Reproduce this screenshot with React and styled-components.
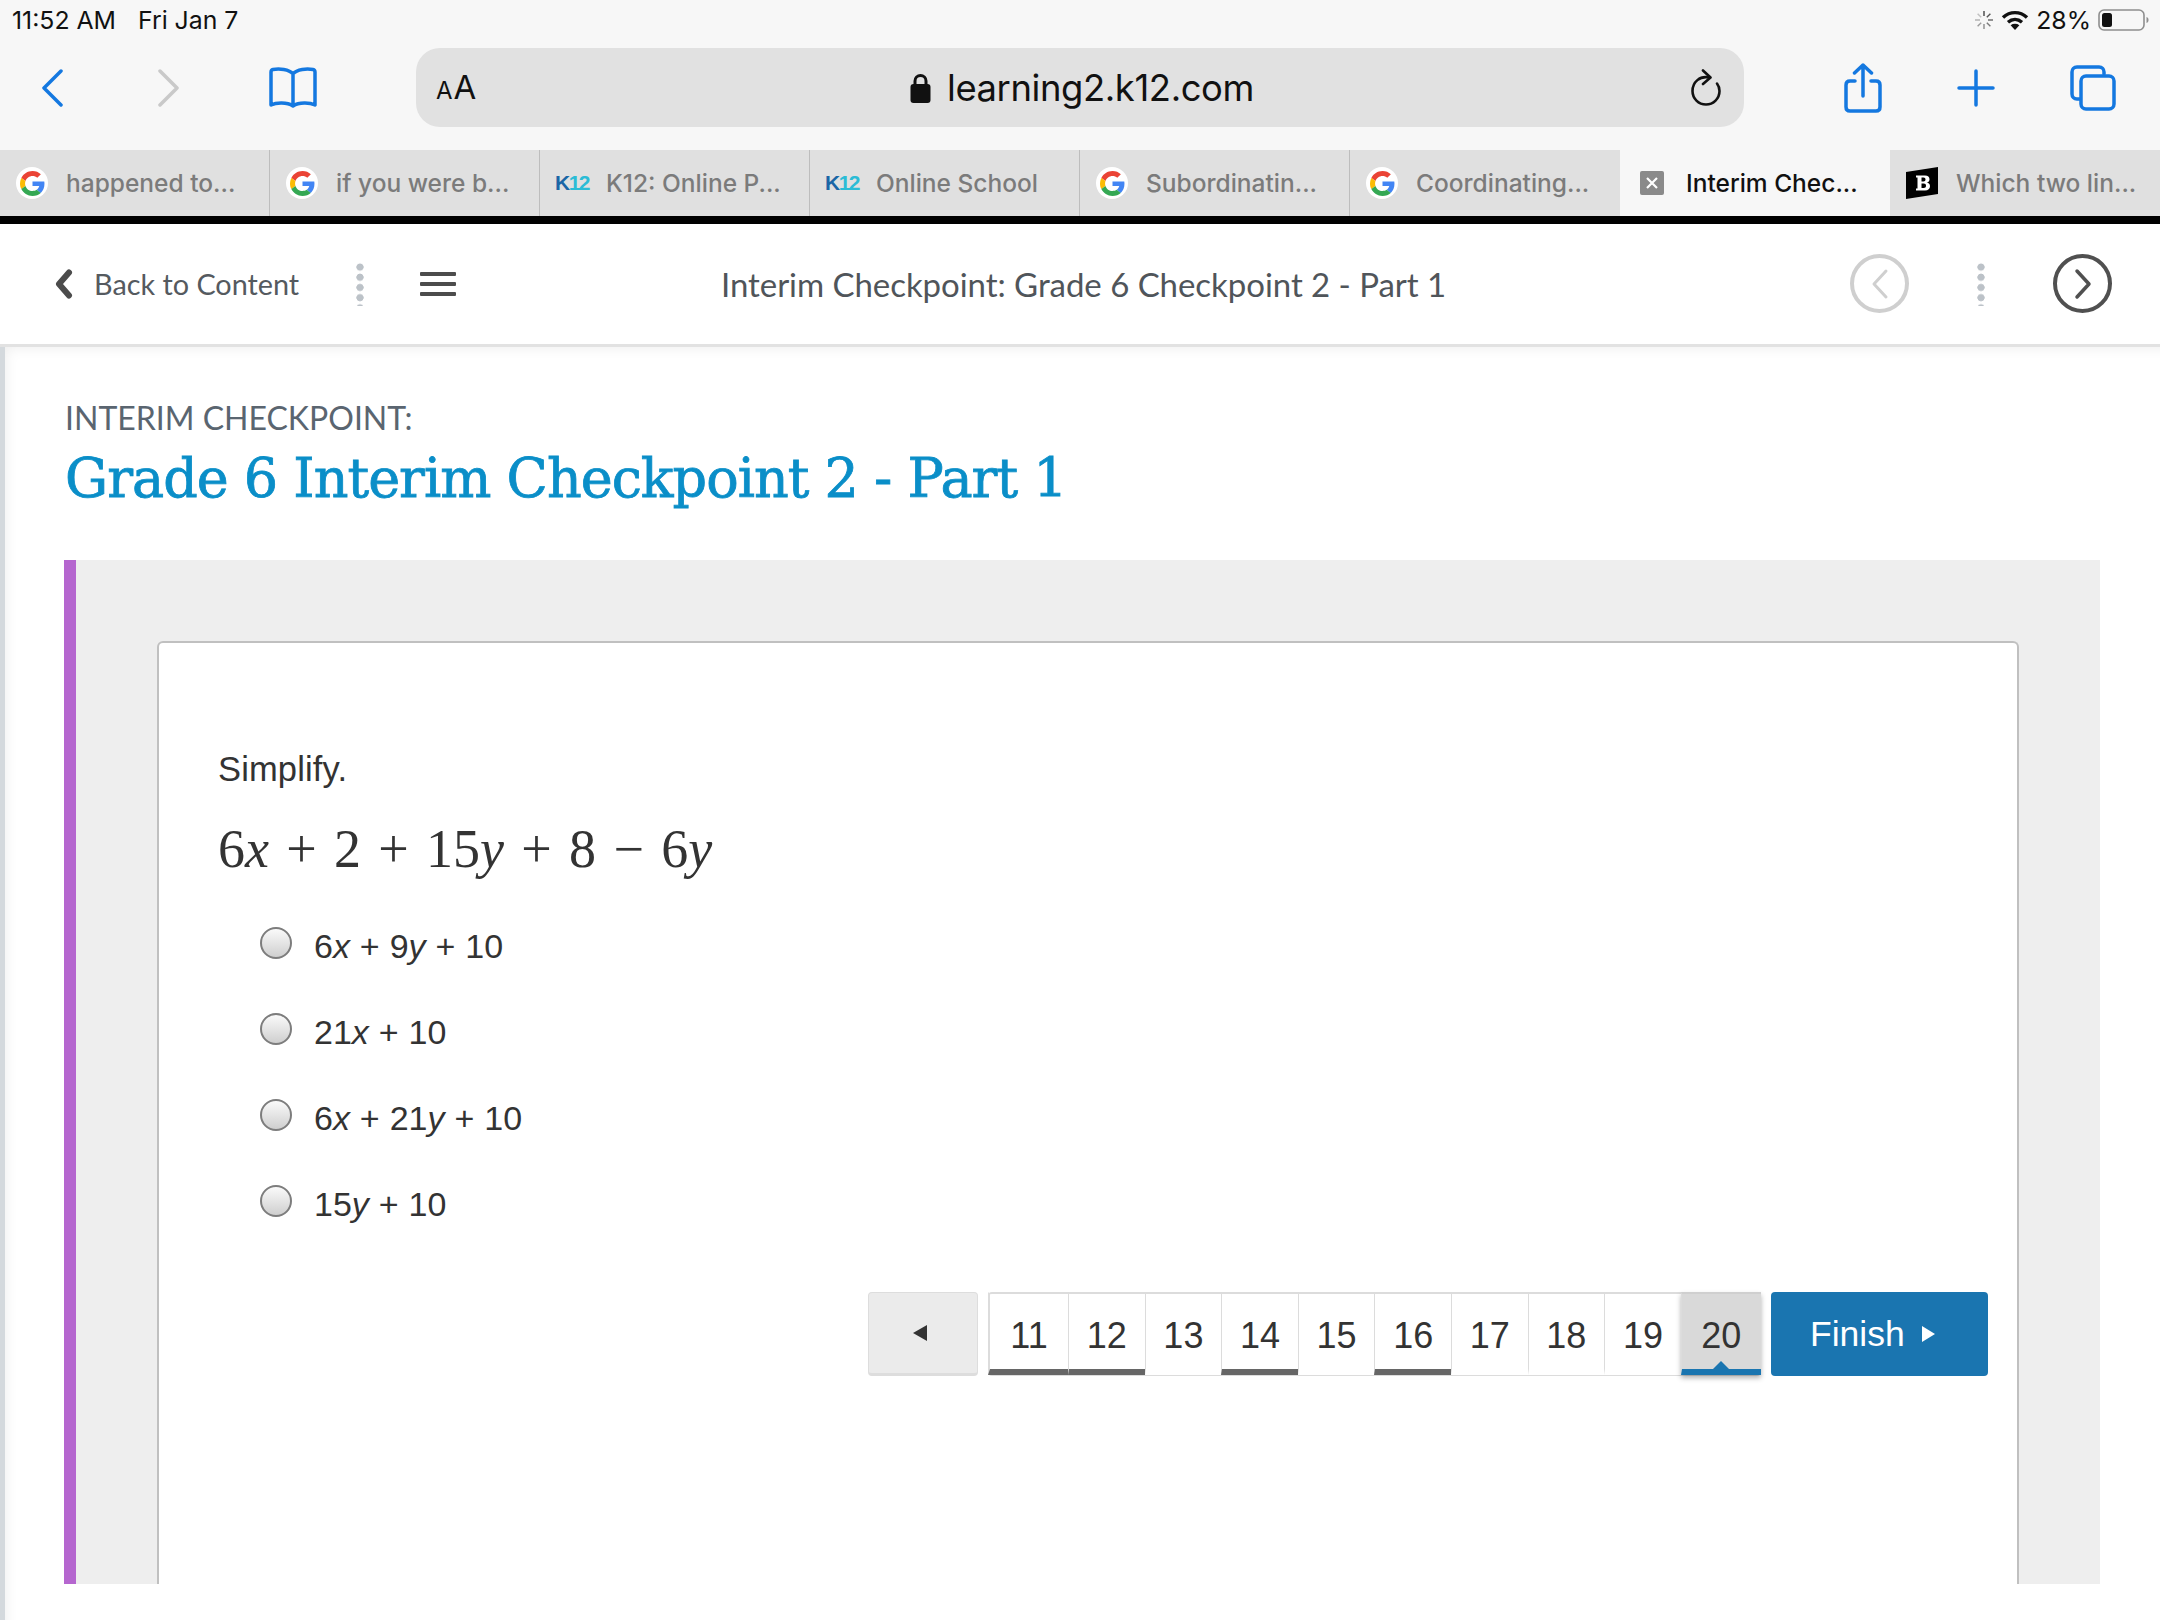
import React from 'react';
import styled, { createGlobalStyle } from 'styled-components';

const GlobalStyle = createGlobalStyle`
    html, body {
        margin: 0;
        padding: 0;
        background: #fff;
    }
    * {
        box-sizing: border-box;
    }
`;

const Screen = styled.div`
    width: 2160px;
    height: 1620px;
    overflow: hidden;
    display: flex;
    flex-direction: column;
    background: #fff;
`;

// ipad status bar + safari chrome
const Chrome = styled.div`
    background: #f7f7f7;
    font-family: Inter, "Liberation Sans", sans-serif;
`;

const StatusBar = styled.div`
    height: 48px;
    padding: 0 11px 8px 12px;
    display: flex;
    align-items: center;
    justify-content: space-between;
    font-size: 24.8px;
    color: #111;
`;

const StatusGroup = styled.div`
    display: flex;
    align-items: center;
    gap: ${p => p.$gap}px;
`;

const Toolbar = styled.div`
    height: 102px;
    padding: 0 0 23px 41px;
    display: flex;
    align-items: center;
    color: #1478e0;
`;

const ToolIcon = styled.svg`
    flex: none;
    margin-left: ${p => p.$left || 0}px;
    fill: none;
    stroke: ${p => p.$muted ? '#c9c9c9' : '#1478e0'};
    stroke-width: ${p => p.$stroke || 3.5};
    stroke-linecap: round;
    stroke-linejoin: round;
`;

const AddressBar = styled.div`
    width: 1328px;
    height: 79px;
    margin-left: 99px;
    padding: 0 22px 0 20px;
    flex: none;
    display: grid;
    grid-template-columns: 1fr auto 1fr;
    align-items: center;
    background: #e1e1e1;
    border-radius: 24px;
    color: #111;
`;

const TextSize = styled.div`
    font-size: 33px;
    line-height: 1;
    small {
        font-size: 24px;
        margin-right: 1px;
    }
`;

const Url = styled.div`
    display: flex;
    align-items: center;
    gap: 16px;
    font-size: 36.4px;
    letter-spacing: -0.4px;
    transform: translateX(3px);
`;

const ReloadSlot = styled.div`
    display: flex;
    justify-content: flex-end;
`;

const TabBar = styled.div`
    height: 66px;
    display: flex;
    background: #e0e0e0;
`;

const Tab = styled.div`
    flex: 0 0 270px;
    padding-left: 16px;
    display: flex;
    align-items: center;
    gap: 18px;
    font-size: 24.5px;
    font-weight: 500;
    color: ${p => p.$active ? '#111' : '#7b7b7b'};
    background: ${p => p.$active ? '#f7f7f7' : 'transparent'};
    border-right: 1px solid ${p => p.$line ? '#bdbdbd' : 'transparent'};
    white-space: nowrap;
`;

const Favicon = styled.div`
    flex: none;
    width: 32px;
    height: 32px;
    display: flex;
    align-items: center;
    justify-content: center;
`;

const GoogleDisc = styled(Favicon)`
    background: #fff;
    border-radius: 50%;
`;

const K12Logo = styled.span`
    font-family: "Liberation Sans", sans-serif;
    font-size: 21px;
    font-weight: 700;
    letter-spacing: -1.5px;
    color: #1b66a6;
    b {
        color: #2bbcd6;
    }
`;

const CloseBox = styled.div`
    width: 24px;
    height: 24px;
    border-radius: 2px;
    background: #8a8a8a;
    display: flex;
    align-items: center;
    justify-content: center;
`;

const BlackStrip = styled.div`
    height: 8px;
    background: #000;
`;

// course player header
const NavBar = styled.div`
    height: 123px;
    flex: none;
    padding: 0 48px 1px 55px;
    display: grid;
    grid-template-columns: 1fr auto 1fr;
    align-items: center;
    font-family: Lato, "Open Sans", sans-serif;
    color: #555a5f;
    border-bottom: 3px solid #e2e2e2;
`;

const NavLeft = styled.div`
    display: flex;
    align-items: center;
`;

const BackLink = styled.div`
    display: flex;
    align-items: center;
    gap: 21px;
    font-size: 28.8px;
    width: 289px;
`;

const Dots = styled.div`
    flex: none;
    width: 8px;
    height: 44px;
    margin: 0 ${p => p.$space || 0}px;
    background: radial-gradient(circle at center, #bcc2c8 3.4px, transparent 3.9px) 0 0 / 8px 10.2px repeat-y;
`;

const Burger = styled.div`
    width: 36px;
    height: 24px;
    margin-left: 44px;
    display: flex;
    flex-direction: column;
    justify-content: space-between;
    i {
        height: 4px;
        border-radius: 1px;
        background: #4c4c4c;
    }
`;

const NavTitle = styled.div`
    font-size: 33px;
    letter-spacing: -0.05px;
    color: #50555a;
    white-space: nowrap;
`;

const NavRight = styled.div`
    display: flex;
    align-items: center;
    justify-content: flex-end;
`;

const RoundButton = styled.div`
    flex: none;
    width: 59px;
    height: 59px;
    border-radius: 50%;
    border: 4px solid ${p => p.$off ? '#cfcfcf' : '#505050'};
    display: flex;
    align-items: center;
    justify-content: center;
`;

const Page = styled.div`
    flex: 1;
    min-height: 0;
    border-left: 5px solid #d4d9dd;
    box-shadow: inset 12px 12px 14px -12px rgba(0, 0, 0, 0.08);
    display: flex;
    flex-direction: column;
    padding: 51px 60px 36px 59px;
`;

const Eyebrow = styled.div`
    font-family: Lato, "Open Sans", sans-serif;
    font-size: 32px;
    line-height: 40px;
    color: #5a6570;
    padding-left: 1px;
`;

const Heading = styled.h1`
    margin: 6px 0 0 1px;
    font-family: "DejaVu Serif", "Liberation Serif", serif;
    font-size: 54px;
    line-height: 70px;
    font-weight: 400;
    letter-spacing: -1px;
    color: #0a8ec8;
    -webkit-text-stroke: 0.8px #0a8ec8;
`;

const Panel = styled.div`
    flex: 1;
    min-height: 0;
    margin-top: 46px;
    border-left: 12px solid #b566cf;
    background: #eeeeee;
    padding: 81px 81px 0;
    display: flex;
`;

const Card = styled.div`
    flex: 1;
    background: #fff;
    border: 2px solid #c0c0c0;
    border-bottom: 0;
    border-radius: 6px 6px 0 0;
    padding: 102px 29px 0 59px;
    font-family: "Liberation Sans", sans-serif;
    color: #333;
`;

const Prompt = styled.div`
    font-size: 34.5px;
    line-height: 48px;
    letter-spacing: 0.15px;
`;

const Expression = styled.div`
    margin-top: 21px;
    font-family: "Liberation Serif", serif;
    font-size: 54px;
    line-height: 70px;
    word-spacing: 3.8px;
    white-space: pre;
`;

const Options = styled.div`
    margin-top: 19px;
    padding-left: 42px;
    display: flex;
    flex-direction: column;
`;

const Option = styled.div`
    height: 86px;
    display: flex;
    align-items: center;
    gap: 22px;
    font-size: 34px;
    word-spacing: 0.5px;
    white-space: pre;
`;

const Radio = styled.span`
    flex: none;
    width: 32px;
    height: 32px;
    margin-top: -6px;
    border-radius: 50%;
    border: 2px solid #7d7d7d;
    background: linear-gradient(#fafafa, #cfcfcf);
`;

const Pager = styled.div`
    margin-top: 45px;
    height: 84px;
    display: flex;
    justify-content: flex-end;
    gap: 10px;
`;

const PrevButton = styled.div`
    width: 110px;
    background: #ebebeb;
    border: 1px solid #ddd;
    border-bottom: 3px solid #ddd;
    border-radius: 4px;
    display: flex;
    align-items: center;
    justify-content: center;
    padding-right: 6px;
`;

const Arrow = styled.span`
    width: 0;
    height: 0;
    border-top: 8px solid transparent;
    border-bottom: 8px solid transparent;
    border-right: ${p => p.$right ? '0' : `14px solid #333`};
    border-left: ${p => p.$right ? `13px solid #fff` : '0'};
`;

const Numbers = styled.div`
    width: 773px;
    display: flex;
    border-radius: 4px;
    background: #fff;
    box-shadow: inset 0 2px 0 #dcdcdc, inset 0 -1px 0 #dcdcdc;
`;

const NumberCell = styled.div`
    flex: 0 0 76.6px;
    &:first-child, &:last-child {
        flex-basis: 80px;
    }
    margin-bottom: 1px;
    padding-top: 8px;
    position: relative;
    display: flex;
    align-items: center;
    justify-content: center;
    font-size: 36px;
    color: #333;
    background: ${p => p.$current ? '#d9d9d9' : 'transparent'};
    border-top: 2px solid ${p => p.$current ? '#cfcfcf' : 'transparent'};
    border-left: ${p => p.$first ? '2px' : '1px'} solid #dcdcdc;
    border-bottom: 6px solid ${p => p.$current ? '#1a75b0' : p.$done ? '#666' : 'transparent'};
    box-shadow: ${p => p.$current ? '0 3px 5px rgba(0,0,0,0.3)' : 'none'};

    &::after {
        content: "";
        display: ${p => p.$current ? 'block' : 'none'};
        position: absolute;
        left: 50%;
        bottom: 0;
        margin-left: -8px;
        border-left: 8px solid transparent;
        border-right: 8px solid transparent;
        border-bottom: 8px solid #1a75b0;
    }
`;

const FinishButton = styled.div`
    width: 217px;
    background: #1a75b0;
    border-radius: 4px;
    display: flex;
    align-items: center;
    padding-left: 39px;
    gap: 17px;
    color: #fff;
    font-size: 35.5px;
`;

const numbers = [
    { n: 11, done: true },
    { n: 12, done: true },
    { n: 13 },
    { n: 14, done: true },
    { n: 15 },
    { n: 16, done: true },
    { n: 17 },
    { n: 18 },
    { n: 19 },
    { n: 20, current: true },
];

function GoogleIcon () {
    return (
        <GoogleDisc>
            <svg width="25" height="25" viewBox="0 0 48 48">
                <path fill="#EA4335" d="M24 9.5c3.54 0 6.71 1.22 9.21 3.6l6.85-6.85C35.9 2.38 30.47 0 24 0 14.62 0 6.51 5.38 2.56 13.22l7.98 6.19C12.43 13.72 17.74 9.5 24 9.5z" />
                <path fill="#4285F4" d="M46.98 24.55c0-1.57-.15-3.09-.38-4.55H24v9.02h12.94c-.58 2.96-2.26 5.48-4.78 7.18l7.73 6c4.51-4.18 7.09-10.36 7.09-17.65z" />
                <path fill="#FBBC05" d="M10.53 28.59c-.48-1.45-.76-2.99-.76-4.59s.27-3.14.76-4.59l-7.98-6.19C.92 16.46 0 20.12 0 24c0 3.88.92 7.54 2.56 10.78l7.97-6.19z" />
                <path fill="#34A853" d="M24 48c6.48 0 11.93-2.13 15.89-5.81l-7.73-6c-2.15 1.45-4.92 2.3-8.16 2.3-6.26 0-11.57-4.22-13.47-9.91l-7.98 6.19C6.51 42.62 14.62 48 24 48z" />
            </svg>
        </GoogleDisc>
    )
}

function K12Icon () {
    return (
        <Favicon>
            <K12Logo>K<b>12</b></K12Logo>
        </Favicon>
    )
}

function Spinner () {
    const angles = [0, 45, 90, 135, 180, 225, 270, 315];
    return (
        <svg width="20" height="20" viewBox="0 0 20 20">
            {angles.map((a, i) => (
                <line key={a} x1="10" y1="1" x2="10" y2="6" stroke="#444" strokeOpacity={1 - i * 0.1} strokeWidth="1.4" transform={`rotate(${a} 10 10)`} />
            ))}
        </svg>
    )
}

function Wifi () {
    return (
        <svg width="28" height="20" viewBox="0 0 28 20" fill="none" stroke="#111" strokeWidth="3.4">
            <path d="M2 7.5C9 1 19 1 26 7.5" />
            <path d="M7 12.2c4.2-3.6 9.8-3.6 14 0" />
            <path d="M14 20l-4.4-4.8c2.6-1.8 6.2-1.8 8.8 0z" fill="#111" stroke="none" />
        </svg>
    )
}

function Battery () {
    return (
        <svg width="51" height="24" viewBox="0 0 51 24">
            <rect x="1" y="2" width="45" height="20" rx="5" fill="none" stroke="#8e8e8e" strokeWidth="1.6" />
            <rect x="4" y="5" width="10" height="14" rx="2.5" fill="#111" />
            <path d="M48.5 9c1.6.5 2 1.6 2 3s-.4 2.5-2 3z" fill="#8e8e8e" />
        </svg>
    )
}

function App () {
    return (
        <Screen>
            <GlobalStyle />
            <Chrome>
                <StatusBar>
                    <StatusGroup $gap={22}>
                        <span>11:52 AM</span>
                        <span>Fri Jan 7</span>
                    </StatusGroup>
                    <StatusGroup $gap={7}>
                        <Spinner />
                        <Wifi />
                        <span>28%</span>
                        <Battery />
                    </StatusGroup>
                </StatusBar>

                <Toolbar>
                    <ToolIcon width="22" height="38" viewBox="0 0 22 38">
                        <path d="M20 2L3 19l17 17" />
                    </ToolIcon>
                    <ToolIcon width="22" height="38" viewBox="0 0 22 38" $left={95} $muted>
                        <path d="M2 2l17 17L2 36" />
                    </ToolIcon>
                    <ToolIcon width="48" height="42" viewBox="0 0 48 42" $left={89}>
                        <path d="M24 7C20 2 10 1.500 4 2.500c-1.500.3-2 1-2 2.500v33c5-2.500 16-3 22 1 6-4 17-3.500 22-1V5c0-1.500-.5-2.200-2-2.500C38 1.500 28 2 24 7zM24 7v32" />
                    </ToolIcon>
                    <AddressBar>
                        <TextSize><small>A</small>A</TextSize>
                        <Url>
                            <svg width="21" height="30" viewBox="0 0 21 30">
                                <path d="M5 13V8a5.500 5.500 0 0 1 11 0v5" fill="none" stroke="#111" strokeWidth="3" />
                                <rect x="0.500" y="11" width="20" height="19" rx="3" fill="#111" />
                            </svg>
                            learning2.k12.com
                        </Url>
                        <ReloadSlot>
                            <svg width="32" height="38" viewBox="0 0 32 38" fill="none" stroke="#111" strokeWidth="2.600" strokeLinecap="round" strokeLinejoin="round">
                                <path d="M19 8.500C10 6.500 2.500 13 2.500 22a13.500 13.500 0 0 0 27 0c0-3-1-5.500-2.500-7.500" />
                                <path d="M13 1.500L20.500 8.500L13 15" />
                            </svg>
                        </ReloadSlot>
                    </AddressBar>
                    <ToolIcon width="38" height="50" viewBox="0 0 38 50" $left={100}>
                        <path d="M11 18H6c-2.500 0-4 1.500-4 4v22c0 2.500 1.500 4 4 4h26c2.500 0 4-1.500 4-4V22c0-2.500-1.500-4-4-4h-5M19 33V2M10.500 10L19 2l8.500 8" />
                    </ToolIcon>
                    <ToolIcon width="38" height="38" viewBox="0 0 38 38" $left={75}>
                        <path d="M19 2v34M2 19h34" />
                    </ToolIcon>
                    <ToolIcon width="46" height="46" viewBox="0 0 46 46" $left={75}>
                        <path d="M34 9V7c0-3-2-5-5-5H7C4 2 2 4 2 7v22c0 3 2 5 5 5h3" />
                        <rect x="11" y="11" width="33" height="33" rx="5" />
                    </ToolIcon>
                </Toolbar>

                <TabBar>
                    <Tab $line><GoogleIcon />happened to...</Tab>
                    <Tab $line><GoogleIcon />if you were b...</Tab>
                    <Tab $line><K12Icon />K12: Online P...</Tab>
                    <Tab $line><K12Icon />Online School</Tab>
                    <Tab $line><GoogleIcon />Subordinatin...</Tab>
                    <Tab><GoogleIcon />Coordinating...</Tab>
                    <Tab $active>
                        <Favicon>
                            <CloseBox>
                                <svg width="12" height="12" viewBox="0 0 12 12" stroke="#fff" strokeWidth="2.200">
                                    <path d="M1 1l10 10M11 1L1 11" />
                                </svg>
                            </CloseBox>
                        </Favicon>
                        Interim Chec...
                    </Tab>
                    <Tab>
                        <Favicon>
                            <svg width="32" height="32" viewBox="0 0 32 32">
                                <path d="M0 5L32 0v27L0 32z" fill="#000" />
                                <path d="M10 8.500h9c3 0 4.500 1.500 4.500 3.700 0 1.800-1 3-2.800 3.400 2.200.3 3.300 1.700 3.300 3.600 0 2.600-1.800 4.300-5 4.300h-9v-2h1.500V10.500H10zm5.500 2v4h2c1.300 0 2-.7 2-2s-.7-2-2-2zm0 6v4.500h2.300c1.400 0 2.200-.8 2.200-2.200s-.8-2.300-2.200-2.300z" fill="#fff" fillRule="evenodd" />
                            </svg>
                        </Favicon>
                        Which two lin...
                    </Tab>
                </TabBar>
            </Chrome>
            <BlackStrip />

            <NavBar>
                <NavLeft>
                    <BackLink>
                        <svg width="18" height="30" viewBox="0 0 18 30" fill="none" stroke="#4c4c4c" strokeWidth="6" strokeLinecap="round" strokeLinejoin="round">
                            <path d="M14 3.500L4 15l10 11.500" />
                        </svg>
                        Back to Content
                    </BackLink>
                    <Dots $space={12} />
                    <Burger><i /><i /><i /></Burger>
                </NavLeft>
                <NavTitle>Interim Checkpoint: Grade 6 Checkpoint 2 - Part 1</NavTitle>
                <NavRight>
                    <RoundButton $off>
                        <svg width="18" height="32" viewBox="0 0 18 32" fill="none" stroke="#cfcfcf" strokeWidth="3" strokeLinecap="round" strokeLinejoin="round">
                            <path d="M15 3L3 16l12 13" />
                        </svg>
                    </RoundButton>
                    <Dots $space={68} />
                    <RoundButton>
                        <svg width="18" height="32" viewBox="0 0 18 32" fill="none" stroke="#505050" strokeWidth="3.500" strokeLinecap="round" strokeLinejoin="round">
                            <path d="M3 3l12 13L3 29" />
                        </svg>
                    </RoundButton>
                </NavRight>
            </NavBar>

            <Page>
                <Eyebrow>INTERIM CHECKPOINT:</Eyebrow>
                <Heading>Grade 6 Interim Checkpoint 2 - Part 1</Heading>
                <Panel>
                    <Card>
                        <Prompt>Simplify.</Prompt>
                        <Expression>6<i>x</i> + 2 + 15<i>y</i> + 8 − 6<i>y</i></Expression>
                        <Options>
                            <Option><Radio /><span>6<i>x</i> + 9<i>y</i> + 10</span></Option>
                            <Option><Radio /><span>21<i>x</i> + 10</span></Option>
                            <Option><Radio /><span>6<i>x</i> + 21<i>y</i> + 10</span></Option>
                            <Option><Radio /><span>15<i>y</i> + 10</span></Option>
                        </Options>
                        <Pager>
                            <PrevButton><Arrow /></PrevButton>
                            <Numbers>
                                {numbers.map((item, i) => (
                                    <NumberCell key={item.n} $first={i === 0} $done={item.done} $current={item.current}>
                                        {item.n}
                                    </NumberCell>
                                ))}
                            </Numbers>
                            <FinishButton>Finish<Arrow $right /></FinishButton>
                        </Pager>
                    </Card>
                </Panel>
            </Page>
        </Screen>
    )
}

export default App
